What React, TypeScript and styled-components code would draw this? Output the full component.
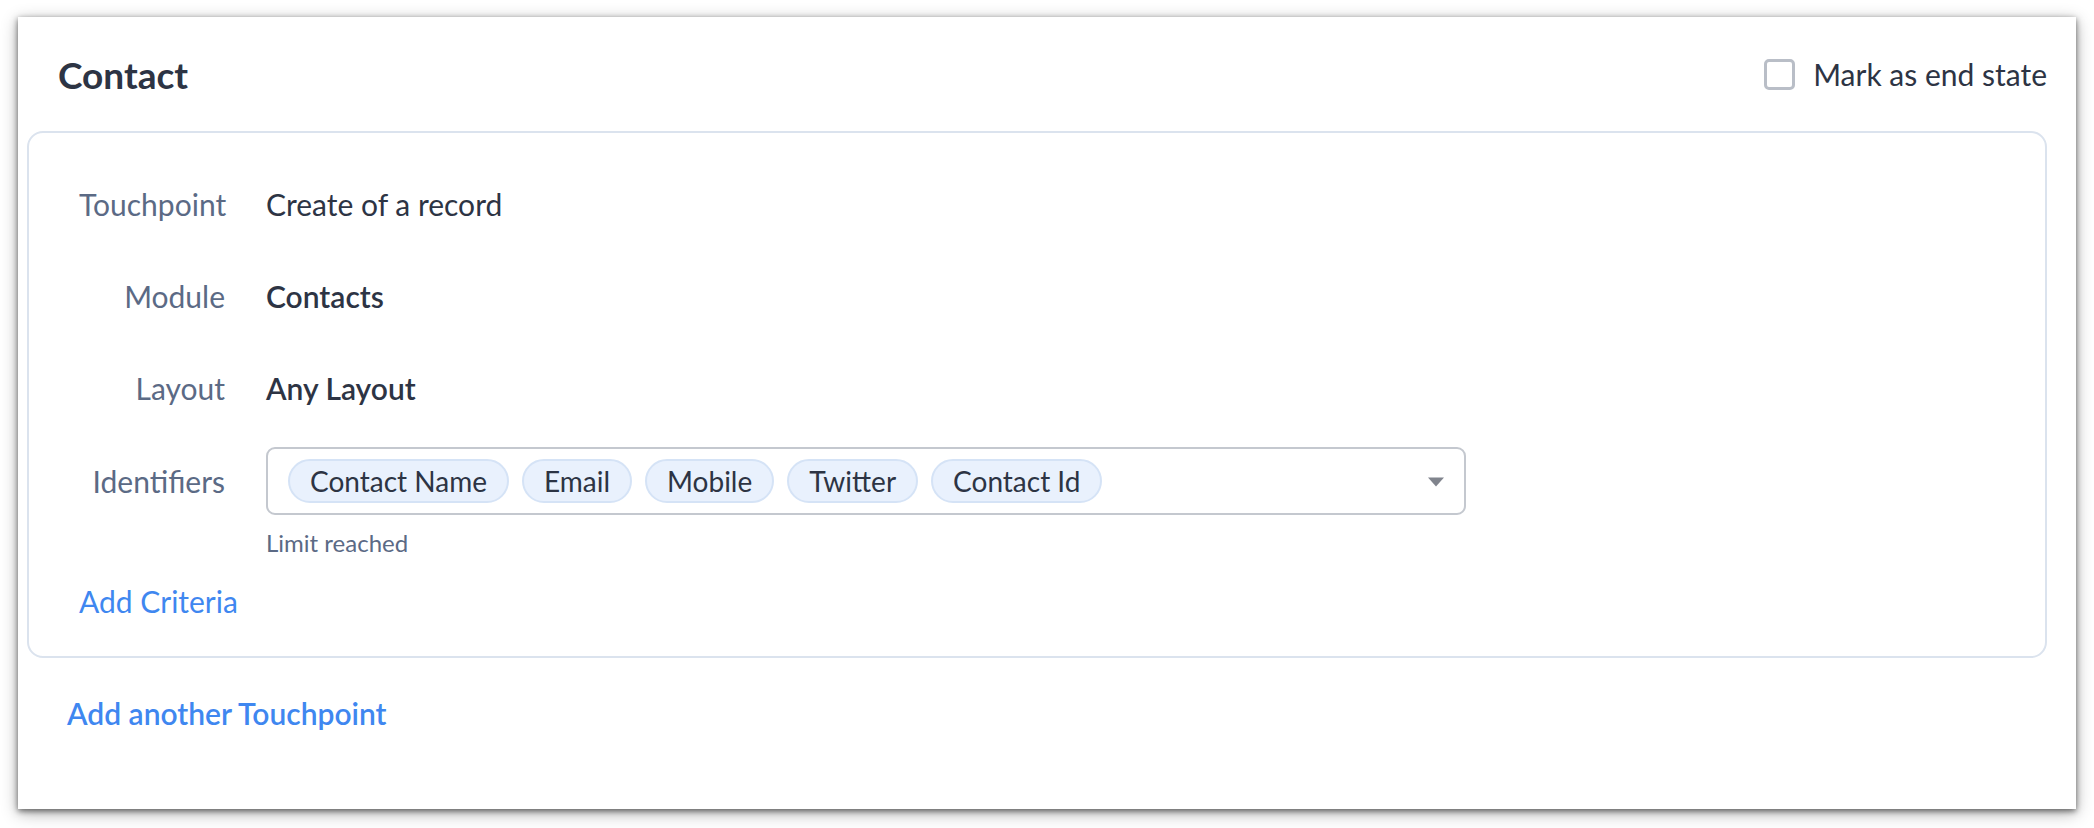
import { FunctionComponent } from 'react';
import styled, { createGlobalStyle } from 'styled-components';

const GlobalStyle = createGlobalStyle`
  html, body {
    margin: 0;
    padding: 0;
    background: #ffffff;
  }
  body {
    font-family: Lato, 'Liberation Sans', sans-serif;
    color: #2d3444;
  }
  * {
    box-sizing: border-box;
  }
`;

const Page = styled.main`
  min-height: 828px;
  padding: 17px 18px 19px;
  background: #ffffff;
`;

const Panel = styled.section`
  height: 792px;
  background: #ffffff;
  box-shadow: 0 2px 6px rgba(0, 0, 0, 0.55), 0 4px 16px rgba(0, 0, 0, 0.3);
  display: flex;
  flex-direction: column;
`;

const Header = styled.header`
  display: flex;
  align-items: center;
  justify-content: space-between;
  height: 114px;
  padding: 0 29px 0 40px;
`;

const Title = styled.h2`
  margin: 0;
  font-size: 37px;
  font-weight: 700;
  color: #2d3444;
`;

const CheckLabel = styled.label`
  display: flex;
  align-items: center;
  gap: 18px;
  font-size: 30px;
  color: #2d3444;
  cursor: pointer;
`;

const CheckBox = styled.span`
  width: 31px;
  height: 31px;
  border: 3px solid #b9bec7;
  border-radius: 5px;
  background: #ffffff;
`;

const Card = styled.div`
  margin: 0 29px 0 9px;
  border: 2px solid #dbe3ee;
  border-radius: 16px;
  padding: 25px 0 35px 50px;
  display: flex;
  flex-direction: column;
`;

const Row = styled.div<{ $height?: number; $top?: number }>`
  display: flex;
  align-items: center;
  height: ${({ $height }) => ($height ? `${$height}px` : 'auto')};
  margin-top: ${({ $top }) => ($top ? `${$top}px` : '0')};
`;

const Label = styled.span`
  width: 146px;
  margin-right: 41px;
  text-align: right;
  white-space: nowrap;
  font-size: 30px;
  line-height: 40px;
  color: #5b6a85;
`;

const Value = styled.span<{ $strong?: boolean }>`
  font-size: 30px;
  line-height: 40px;
  font-weight: ${({ $strong }) => ($strong ? 600 : 400)};
  color: #2d3444;
`;

const Select = styled.div`
  width: 1200px;
  height: 68px;
  border: 2px solid #c4c8cf;
  border-radius: 9px;
  padding: 10px 19px 10px 20px;
  display: flex;
  align-items: center;
  gap: 13px;
`;

const Chip = styled.span`
  height: 44px;
  padding: 0 20px;
  border: 2px solid #d5e3f6;
  border-radius: 22px;
  background: #e9f1fd;
  display: inline-flex;
  align-items: center;
  font-size: 28px;
  color: #2d3444;
  white-space: nowrap;
`;

const Caret = styled.svg`
  margin-left: auto;
  flex-shrink: 0;
`;

const Hint = styled.div`
  margin: 14px 0 0 187px;
  font-size: 24px;
  line-height: 28px;
  color: #5b6a85;
`;

const Link = styled.a<{ $strong?: boolean }>`
  display: inline-block;
  font-size: 30px;
  line-height: 40px;
  font-weight: ${({ $strong }) => ($strong ? 600 : 400)};
  color: #3f87f0;
  text-decoration: none;
  cursor: pointer;
`;

const CriteriaRow = styled.div`
  margin-top: 24px;
`;

const Footer = styled.div`
  padding-left: 49px;
  margin-top: 35px;
`;

const details = [
  { label: 'Touchpoint', value: 'Create of a record', strong: false },
  { label: 'Module', value: 'Contacts', strong: true },
  { label: 'Layout', value: 'Any Layout', strong: true },
];

const identifiers = ['Contact Name', 'Email', 'Mobile', 'Twitter', 'Contact Id'];

const App: FunctionComponent = () => {
  return (
    <Page>
      <GlobalStyle />
      <Panel>
        <Header>
          <Title>Contact</Title>
          <CheckLabel>
            <CheckBox />
            Mark as end state
          </CheckLabel>
        </Header>
        <Card>
          {details.map((item) => (
            <Row key={item.label} $height={92}>
              <Label>{item.label}</Label>
              <Value $strong={item.strong}>{item.value}</Value>
            </Row>
          ))}
          <Row $top={13}>
            <Label>Identifiers</Label>
            <Select>
              {identifiers.map((name) => (
                <Chip key={name}>{name}</Chip>
              ))}
              <Caret width="18" height="11" viewBox="0 0 18 11">
                <path d="M1 1.5h16L9 10.5z" fill="#80848d" />
              </Caret>
            </Select>
          </Row>
          <Hint>Limit reached</Hint>
          <CriteriaRow>
            <Link>Add Criteria</Link>
          </CriteriaRow>
        </Card>
        <Footer>
          <Link $strong>Add another Touchpoint</Link>
        </Footer>
      </Panel>
    </Page>
  );
};

export default App;
